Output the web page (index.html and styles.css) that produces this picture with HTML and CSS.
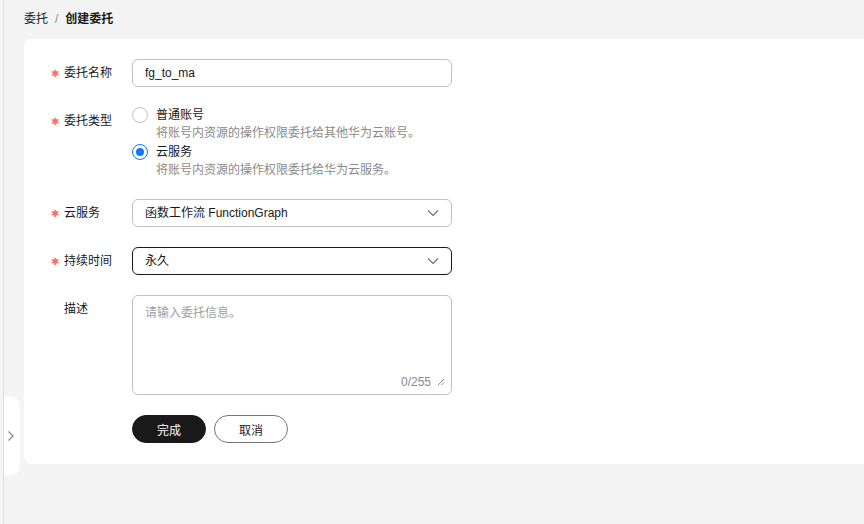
FILE: index.html
```html
<!DOCTYPE html>
<html lang="zh-CN">
<head>
  <meta charset="UTF-8" />
  <meta name="viewport" content="width=device-width, initial-scale=1" />
  <title>创建委托</title>
  <link rel="stylesheet" href="styles.css">
</head>
<body>
  <div class="sidebar">
    <div class="collapse-tab">
      <svg width="8" height="12" viewBox="0 0 8 12"><path d="M1.5 1.5l4.5 4.5-4.5 4.5" fill="none" stroke="#8a8a8a" stroke-width="1.3"/></svg>
    </div>
  </div>

  <div class="main">
    <div class="breadcrumb">
      <span class="crumb">委托</span>
      <span class="sep">/</span>
      <span class="crumb current">创建委托</span>
    </div>

    <div class="card">
      <!-- 委托名称 -->
      <div class="form-row">
        <label class="form-label required">委托名称</label>
        <div class="form-control">
          <div class="input">fg_to_ma</div>
        </div>
      </div>

      <!-- 委托类型 -->
      <div class="form-row">
        <label class="form-label required">委托类型</label>
        <div class="form-control radio-group">
          <div class="radio">
            <span class="radio-dot"></span>
            <span>普通账号</span>
          </div>
          <div class="radio-desc">将账号内资源的操作权限委托给其他华为云账号。</div>
          <div class="radio">
            <span class="radio-dot checked"></span>
            <span>云服务</span>
          </div>
          <div class="radio-desc">将账号内资源的操作权限委托给华为云服务。</div>
        </div>
      </div>

      <!-- 云服务 -->
      <div class="form-row">
        <label class="form-label required">云服务</label>
        <div class="form-control">
          <div class="select">
            <span>函数工作流 FunctionGraph</span>
            <svg width="12" height="12" viewBox="0 0 12 12"><path d="M1 3.5l5 5 5-5" fill="none" stroke="#6b6b6b" stroke-width="1.1"/></svg>
          </div>
        </div>
      </div>

      <!-- 持续时间 -->
      <div class="form-row">
        <label class="form-label required">持续时间</label>
        <div class="form-control">
          <div class="select active">
            <span>永久</span>
            <svg width="12" height="12" viewBox="0 0 12 12"><path d="M1 3.5l5 5 5-5" fill="none" stroke="#6b6b6b" stroke-width="1.1"/></svg>
          </div>
        </div>
      </div>

      <!-- 描述 -->
      <div class="form-row">
        <label class="form-label">描述</label>
        <div class="form-control">
          <div class="textarea">
            <span class="placeholder">请输入委托信息。</span>
            <div class="textarea-foot">
              <span class="counter">0/255</span>
              <svg width="8" height="8" viewBox="0 0 8 8"><path d="M1 7l6-6M4.5 7l2.5-2.5" stroke="#8a8a8a" stroke-width="1"/></svg>
            </div>
          </div>
        </div>
      </div>

      <div class="form-row">
        <div class="form-label"></div>
        <div class="form-control actions">
          <button class="btn primary">完成</button>
          <button class="btn">取消</button>
        </div>
      </div>
    </div>
  </div>
</body>
</html>
```

FILE: styles.css
```css
* {
  box-sizing: border-box;
  font-family: "Liberation Sans", "Noto Sans CJK SC", sans-serif;
}

body {
  margin: 0;
  height: 100vh;
  overflow: hidden;
  display: flex;
  background: #f4f4f4;
  color: #191919;
  font-size: 12px;
}

.sidebar {
  width: 4px;
  border-right: 1px solid #dfdfdf;
  position: relative;
}

.collapse-tab {
  position: absolute;
  left: 4px;
  top: 396px;
  width: 16px;
  height: 80px;
  background: #fff;
  border-radius: 0 10px 10px 0;
  display: flex;
  align-items: center;
  justify-content: center;
  padding-right: 2px;
}

.main {
  flex: 1;
  padding-left: 20px;
}

.breadcrumb {
  padding: 9px 0 10px;
  line-height: 20px;
  display: flex;
  gap: 7px;
}

.crumb {
  color: #191919;
}

.crumb.current {
  font-weight: bold;
}

.sep {
  color: #8a8a8a;
}

.card {
  background: #fff;
  border-radius: 8px 0 0 8px;
  margin-right: -20px;
  padding: 20px 28px 21px;
  display: flex;
  flex-direction: column;
  gap: 20px;
}

.form-row {
  display: flex;
  align-items: flex-start;
}

.form-label {
  width: 80px;
  flex-shrink: 0;
  line-height: 28px;
  padding-left: 12px;
  position: relative;
}

.form-label.required::before {
  content: "\2731";
  position: absolute;
  left: -1px;
  top: 1px;
  line-height: 28px;
  color: #f66f6a;
  font-family: "DejaVu Sans", sans-serif;
  font-size: 10px;
}

.form-control {
  width: 320px;
}

.input,
.select {
  height: 28px;
  border: 1px solid #c2c2c2;
  border-radius: 6px;
  padding: 0 12px;
  line-height: 26px;
}

.select {
  display: flex;
  align-items: center;
  justify-content: space-between;
}

.select.active {
  border-color: #191919;
}

.radio-group {
  display: flex;
  flex-direction: column;
}

.radio {
  display: flex;
  align-items: center;
  gap: 8px;
  line-height: 18px;
  height: 17px;
  margin-top: -1px;
}

.radio-dot {
  width: 16px;
  height: 16px;
  border: 1px solid #c2c2c2;
  border-radius: 50%;
  position: relative;
}

.radio-dot.checked {
  border-color: #1476ff;
}

.radio-dot.checked::after {
  content: "";
  position: absolute;
  left: 3px;
  top: 3px;
  width: 8px;
  height: 8px;
  border-radius: 50%;
  background: #1476ff;
}

.radio-desc {
  padding-left: 24px;
  line-height: 18px;
  margin-top: 1px;
  color: #8a8a8a;
}

.radio-desc + .radio {
  margin-top: 1px;
}

.textarea {
  height: 100px;
  border: 1px solid #c2c2c2;
  border-radius: 6px;
  padding: 8px 12px 4px;
  display: flex;
  flex-direction: column;
  justify-content: space-between;
}

.placeholder {
  color: #a0a0a0;
  line-height: 18px;
}

.textarea-foot {
  display: flex;
  justify-content: flex-end;
  align-items: center;
  gap: 6px;
  margin-right: -6px;
  line-height: 16px;
}

.counter {
  color: #8a8a8a;
}

.actions {
  display: flex;
  gap: 8px;
}

.btn {
  width: 74px;
  height: 28px;
  border-radius: 14px;
  border: 1px solid #757575;
  background: #fff;
  color: #191919;
  font-size: 12px;
  cursor: pointer;
}

.btn.primary {
  background: #191919;
  border-color: #191919;
  color: #fff;
}
```
